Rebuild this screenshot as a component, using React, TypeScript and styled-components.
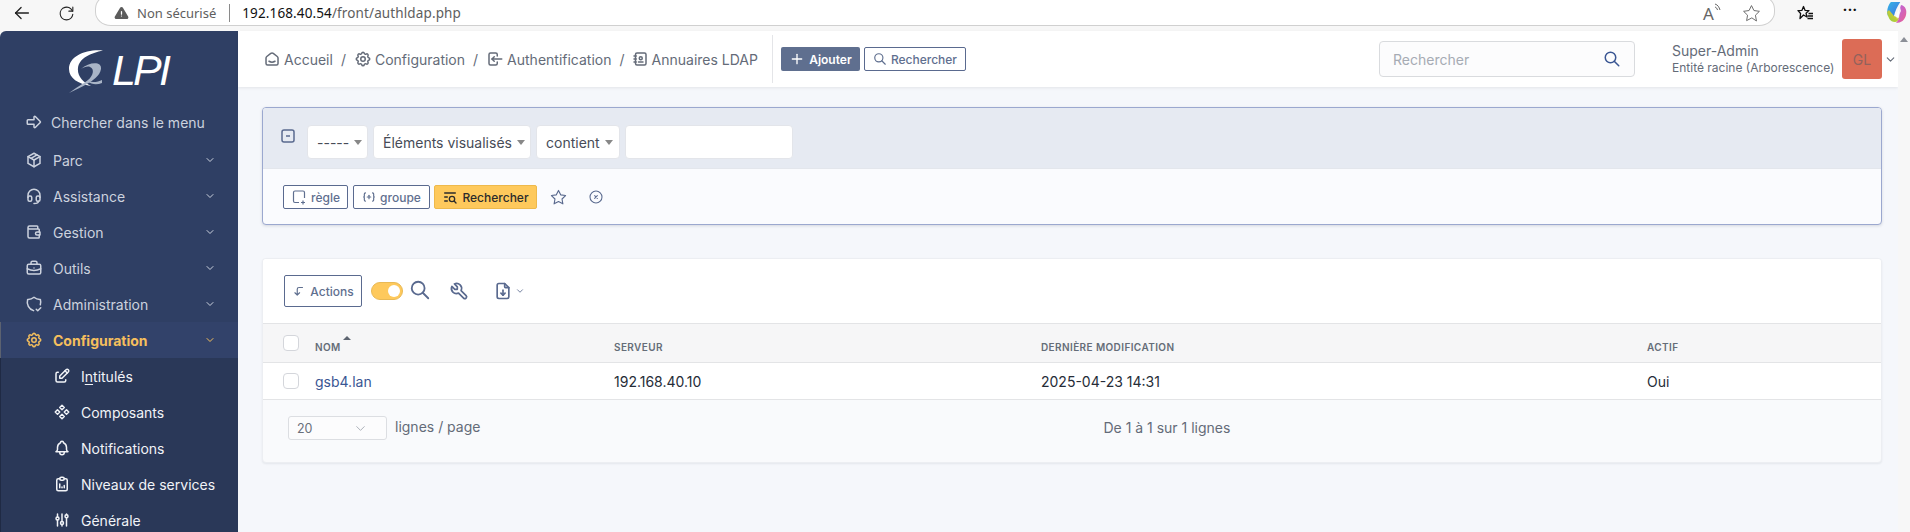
import React from "react";
import styled, { createGlobalStyle } from "styled-components";
import {
  TbAddressBook, TbAdjustments, TbAlertTriangleFilled, TbArrowBigRight, TbArrowLeft, TbBell, TbBriefcase,
  TbChevronDown, TbCircleX, TbCodePlus, TbComponents, TbCornerLeftDown, TbEdit, TbFileDownload, TbHeadset,
  TbListSearch, TbLogin, TbPackage, TbPlus, TbReload, TbReportAnalytics, TbSearch, TbSettings, TbShieldCheck,
  TbSmartHome, TbStar, TbTool, TbWallet,
} from "react-icons/tb";

const Global = createGlobalStyle`
  html, body { margin: 0; padding: 0; height: 100%; overflow: hidden; background: #f7f7f7; }
  body { font-family: Inter, "Liberation Sans", sans-serif; font-size: 14px; }
  * { box-sizing: border-box; }
`;

const Page = styled.div`height: 532px; display: flex; flex-direction: column; overflow: hidden;`;

/* Browser chrome */
const Chrome = styled.div`height: 31px; flex: none; display: flex; align-items: flex-start; background: #f7f7f7; font-family: "Noto Sans", "Liberation Sans", sans-serif;`;
const ChromeBtn = styled.div<{ $w: number }>`
  width: ${p => p.$w}px; height: 26px; flex: none; display: flex; align-items: center; justify-content: center; color: #222;
`;
const AddressBar = styled.div`
  flex: none; width: 1680px; height: 31px; margin-top: -5px; margin-left: 7px; padding: 5px 13px 0 18px;
  display: flex; align-items: center; background: #fff; border: 1px solid #d0d0d0; border-radius: 14px 16px 16px 16px / 14px 14px 14px 14px;
  font-size: 13px; color: #5e5e5e;
`;
const Warn = styled.span`display: flex; color: #5c5c5c; margin-right: 8px;`;
const UrlDivider = styled.span`width: 1px; height: 18px; background: #8a8a8a; margin: 0 12px 0 13px;`;
const UrlHost = styled.span`color: #111; font-size: 13.5px; letter-spacing: .12px;`;
const UrlRest = styled.span`color: #5e5e5e; font-size: 13.5px; letter-spacing: .12px;`;
const AddressEnd = styled.div`margin-left: auto; display: flex; align-items: center; gap: 17px; color: #666;`;
const ReadAloud = styled.span`position: relative; font-size: 17px; width: 22px; color: #666; line-height: 1;`;
const ChromeRight = styled.div`flex: none; display: flex; align-items: center; height: 26px; margin-left: 22px; gap: 29px; color: #111;`;
const Dots = styled.span`font-size: 14px; font-weight: 700; letter-spacing: 1px; line-height: 1; width: 14px; color: #111; margin-top: -6px;`;

/* Main */
const Main = styled.div`flex: 1; min-height: 0; display: flex;`;
const Sidebar = styled.nav`
  width: 238px; flex: none; overflow: hidden; border-top-left-radius: 6px;
  background: #2f3f64;
  display: flex; flex-direction: column;
`;
const LogoZone = styled.div`height: 73px; flex: none; display: flex; align-items: flex-start; padding: 19px 0 0 68px;`;
const LogoText = styled.span`
  font-family: "Liberation Sans", sans-serif; font-style: italic; font-size: 43px; line-height: 40px; letter-spacing: -2.8px;
  color: #fff; margin: 0 0 0 7px;
`;
const Nav = styled.div`display: flex; flex-direction: column;`;
const NavRow = styled.div<{ $active?: boolean; $first?: boolean }>`
  height: 36px; flex: none; display: flex; align-items: center; padding: 0 22px 0 ${p => (p.$active ? 24 : 25)}px; gap: 10px;
  margin-bottom: ${p => (p.$first ? 2 : 0)}px;
  color: ${p => (p.$active ? "#f5bf5d" : "#ccd2de")}; font-weight: ${p => (p.$active ? 700 : 400)};
  background: ${p => (p.$active ? "#32426a" : "transparent")};
  border-left: ${p => (p.$active ? "1px solid #5c6270" : "0")};
  font-size: 14px;
`;
const NavLabel = styled.span<{ $tight?: boolean }>`flex: 1; margin-left: ${p => (p.$tight ? -2 : 0)}px;`;
const SubMenu = styled.div`flex: 1; background: #2a3858; border-left: 1px solid #1f2a44; display: flex; flex-direction: column;`;
const SubRow = styled.div`height: 36px; flex: none; display: flex; align-items: center; gap: 10px; padding-left: 52px; color: #f1f3f7; font-size: 14px;`;
const Under = styled.span`text-decoration: underline; text-underline-offset: 2px;`;

const Content = styled.div`flex: 1; min-width: 0; background: #f5f7fb; display: flex; flex-direction: column;`;
const Header = styled.header`
  height: 56px; flex: none; background: #fff; box-shadow: 0 1px 3px rgba(0,0,0,.08);
  display: flex; align-items: center; padding: 0 9px 0 25px; color: #646b78;
`;
const Crumbs = styled.div`display: flex; align-items: center; height: 48px;`;
const Crumb = styled.span<{ $tight?: boolean }>`display: flex; align-items: center; gap: 3px; color: #646b78; margin-left: ${p => (p.$tight ? -2 : 0)}px;`;
const CrumbSep = styled.span`margin: 0 8px; color: #646b78;`;
const HeadDivider = styled.span`width: 1px; height: 48px; background: #e4e5e8; margin: 0 8px 0 14px;`;
const AddBtn = styled.div`
  height: 24px; width: 79px; display: flex; align-items: center; justify-content: center; gap: 4px; background: #5f6f8f; color: #fff; font-weight: 600;
  font-size: 12px; border-radius: 2px; margin-right: 4px;
`;
const OutlineBtn = styled.div<{ $w?: number; $h?: number }>`
  height: ${p => p.$h ?? 24}px; ${p => (p.$w ? `width: ${p.$w}px;` : "")} display: inline-flex; align-items: center; justify-content: center; gap: 4px;
  background: #fff; border: 1px solid #5a6a8f; border-radius: 2px; color: #5f6f8f; font-size: 12px; font-weight: 500; flex: none;
`;
const HeadRight = styled.div`margin-left: auto; display: flex; align-items: center;`;
const SearchBox = styled.div`
  width: 256px; height: 36px; border: 1px solid #d9dbde; border-radius: 4px; background: #fcfcfd; display: flex; align-items: center;
  padding: 0 13px 0 13px; color: #a6abb4; justify-content: space-between; margin-right: 37px;
`;
const SearchIcon = styled.span`display: flex; color: #3a5693;`;
const UserInfo = styled.div`display: flex; flex-direction: column; gap: 1px; line-height: 16px; color: #646b78; margin-right: 9px; width: 161px;`;
const UserName = styled.span`font-size: 14px;`;
const UserEntity = styled.span`font-size: 12px; white-space: nowrap;`;
const Avatar = styled.div`
  width: 40px; height: 40px; background: #dc6c56; border-radius: 3px; display: flex; align-items: center; justify-content: center; color: #92625c; font-size: 14px;
`;
const UserChevron = styled.span`display: flex; color: #646b78; margin-left: 2px; margin-right: -8px;`;

const Body = styled.div`flex: 1; padding: 20px 16px 0 24px; display: flex; flex-direction: column; gap: 33px;`;
const SearchCard = styled.section`
  height: 118px; flex: none; border: 1px solid #9ba8cf; border-radius: 4px; background: #fafbfe; box-shadow: 0 1px 3px rgba(30,40,70,.15); overflow: hidden;
`;
const CriteriaRow = styled.div`
  height: 61px; background: #e6eaf2; display: flex; align-items: center; padding: 8px 0 0 18px; gap: 5px; border-bottom: 1px solid #e3e6ec;
`;
const Minus = styled.span`display: flex; color: #5a6a8f; margin-right: 7px; margin-top: -12px;`;
const Field = styled.div<{ $w: number }>`
  width: ${p => p.$w}px; height: 34px; background: #fff; border: 1px solid #e3e5ea; border-radius: 4px; padding: 0 6px 0 9px;
  display: flex; align-items: center; gap: 5px; color: #474c57; font-size: 14px; white-space: nowrap;
`;
const Caret = styled.span`width: 0; height: 0; border-left: 4px solid transparent; border-right: 4px solid transparent; border-top: 5px solid #888;`;
const BtnRow = styled.div`display: flex; align-items: center; height: 56px; padding: 0 0 0 20px; gap: 5px;`;
const RunBtn = styled.div`
  width: 103px; height: 24px; background: #fec95c; border: 1px solid #eeb94c; border-radius: 2px; display: flex; align-items: center; justify-content: center; gap: 4px;
  color: #2b2b2b; font-size: 12px; font-weight: 500; margin-left: -1px;
`;
const PlainIcon = styled.span<{ $ml: number }>`display: flex; color: #5a6a8f; margin-left: ${p => p.$ml}px;`;

const TableCard = styled.section`
  height: 205px; flex: none; background: #f9fafc; border: 1px solid #eceef2; border-radius: 4px; box-shadow: 0 1px 2px rgba(30,40,70,.08); overflow: hidden; display: flex; flex-direction: column;
`;
const Toolbar = styled.div`height: 65px; flex: none; background: #fff; display: flex; align-items: center; padding: 0 0 0 21px; border-bottom: 1px solid #e3e4e6;`;
const Toggle = styled.span`width: 32px; height: 18px; border-radius: 9px; background: #fec95c; border: 1px solid #e9b955; position: relative; margin: 0 6px 0 9px; flex: none;`;
const Knob = styled.span`position: absolute; right: 2px; top: 2px; width: 12px; height: 12px; border-radius: 50%; background: #fff;`;
const Tool = styled.span<{ $ml?: number; $up?: number }>`display: flex; align-items: center; color: #5a6a8f; margin-left: ${p => p.$ml ?? 0}px; margin-top: -${p => p.$up ?? 0}px;`;
const Grid = styled.div<{ $head?: boolean }>`
  display: grid; grid-template-columns: 52px 299px 427px 606px 1fr; align-items: center; flex: none; height: ${p => (p.$head ? 39 : 37)}px;
  background: ${p => (p.$head ? "#f6f6f7" : "#fff")}; border-bottom: 1px solid #e3e4e6;
`;
const Check = styled.span`width: 16px; height: 16px; border: 1px solid #d4d6db; border-radius: 4px; background: #fff; margin-left: 20px; display: block;`;
const Th = styled.span`font-size: 10px; font-weight: 600; letter-spacing: .4px; color: #656d78; text-transform: uppercase; position: relative; margin-top: 7px;`;
const SortArrow = styled.span`
  position: absolute; left: 28px; top: -5px; width: 0; height: 0; border-left: 4px solid transparent; border-right: 4px solid transparent; border-bottom: 4px solid #5d6470;
`;
const Td = styled.span`color: #262c37; font-size: 14px;`;
const LinkTd = styled.span`color: #3a5693; font-size: 14px; font-weight: 400;`;
const Footer = styled.div`flex: 1; display: flex; align-items: flex-start; padding: 16px 0 0 25px;`;
const PerPage = styled.div`
  width: 99px; height: 24px; background: #fcfcfd; border: 1px solid #dcdee2; border-radius: 3px; display: flex; align-items: center; justify-content: space-between;
  padding: 0 18px 0 8px; color: #6a707b; font-size: 12.5px;
`;
const FooterLabel = styled.span`margin-left: 8px; color: #646b78; font-size: 14px; line-height: 22px;`;
const FooterCount = styled.span`margin-left: 623px; color: #646b78; font-size: 14px; line-height: 24px;`;

const Scrollbar = styled.div`width: 12px; flex: none; background: #f7f7f7; display: flex; justify-content: center; padding-top: 6px;`;
const ScrollArrow = styled.span`width: 0; height: 0; border-left: 4px solid transparent; border-right: 4px solid transparent; border-bottom: 5px solid #8b8f97;`;

const sideIcon = { size: 18, strokeWidth: 2 };

const navItems: [string, React.ReactNode][] = [
  ["Parc", <TbPackage {...sideIcon} />],
  ["Assistance", <TbHeadset {...sideIcon} />],
  ["Gestion", <TbWallet {...sideIcon} />],
  ["Outils", <TbBriefcase {...sideIcon} />],
  ["Administration", <TbShieldCheck {...sideIcon} />],
];

function Logo() {
  return (
    <svg width="37" height="44" viewBox="0 0 37 44" style={{ flex: "none" }}>
      <path d="M35 0.5 C18 -1 1 6 1 19 C1 28 10 34 23 36 C15 32 9 26 10 18 C11 8 23 3 35 0.5Z" fill="#fff" />
      <path d="M13 19 C21 12 34 11 33 19 C32 26 24 31 19 34 C14 37 7 40 1 43 C9 37 15 34 20 30 C25 26 27 19 22 17 C20 16 16 17 13 19Z" fill="#a9b4c6" />
      <path d="M19 31 C25 33 30 32 34 30 L34 33 C29 35 24 35 19 31Z" fill="#a9b4c6" />
    </svg>
  );
}

function Copilot() {
  return (
    <svg width="21" height="22" viewBox="0 0 21 22">
      <defs>
        <linearGradient id="c1" x1="0" y1="0" x2="1" y2="1"><stop offset="0" stopColor="#35b8e6" /><stop offset="1" stopColor="#3f6fe0" /></linearGradient>
        <linearGradient id="c2" x1="0" y1="1" x2="1" y2="0"><stop offset="0" stopColor="#8bd13c" /><stop offset="1" stopColor="#f5c536" /></linearGradient>
        <linearGradient id="c3" x1="0" y1="0" x2="1" y2="1"><stop offset="0" stopColor="#b266e8" /><stop offset="1" stopColor="#ef5f8c" /></linearGradient>
      </defs>
      <path d="M6 -1 H15 C12 3 9 9 8 14 L2 14 C0 9 2 2 6 -1Z" fill="url(#c1)" />
      <path d="M1 10 C2 15 4 20 9 20 C11 20 12 19 13 16 L8 14 L3 8Z" fill="url(#c2)" />
      <path d="M15 3 C20 4 21 9 20 13 C19 18 15 21 10 21 C13 18 14 13 13 9Z" fill="url(#c3)" />
      <path d="M10 13 L14 5 L15 9 L11 17Z" fill="#fff" opacity=".85" />
    </svg>
  );
}

function Collections() {
  return (
    <svg width="17" height="17" viewBox="0 0 17 17" fill="none" stroke="#111" strokeWidth="1.3">
      <path d="M6.5 1.5 L8 5.3 L12 5.6 L9 8.2 L10 12 L6.5 10 L3 13.5 L3.6 8.5 L1 5.6 L5 5.3Z" strokeLinejoin="round" />
      <path d="M11.5 8.5H16 M10.5 11H16 M10.5 13.5H16" />
    </svg>
  );
}

function MinusBox() {
  return (
    <svg width="14" height="14" viewBox="0 0 14 14" fill="none" stroke="currentColor" strokeWidth="1.5">
      <rect x="1" y="1" width="12" height="12" rx="2" />
      <path d="M5 7H9" />
    </svg>
  );
}

export default function App() {
  return (
    <Page>
      <Global />
      <Chrome>
        <ChromeBtn $w={44}><TbArrowLeft size={22} strokeWidth={1.4} /></ChromeBtn>
        <ChromeBtn $w={44}><TbReload size={19} strokeWidth={1.4} /></ChromeBtn>
        <AddressBar>
          <Warn><TbAlertTriangleFilled size={15} /></Warn>
          <span>Non sécurisé</span>
          <UrlDivider />
          <UrlHost>192.168.40.54</UrlHost>
          <UrlRest>/front/authldap.php</UrlRest>
          <AddressEnd>
            <ReadAloud>A<svg width="8" height="10" viewBox="0 0 8 10" fill="none" stroke="#666" style={{ position: "absolute", left: 11, top: -2 }}><path d="M1 1C4 2 5 4 6 7 M1 4C2.5 4.5 3 5.5 3.5 7" /></svg></ReadAloud>
            <TbStar size={19} strokeWidth={1.2} />
          </AddressEnd>
        </AddressBar>
        <ChromeRight>
          <Collections />
          <Dots>···</Dots>
          <Copilot />
        </ChromeRight>
      </Chrome>
      <Main>
        <Sidebar>
          <LogoZone>
            <Logo />
            <LogoText>LPI</LogoText>
          </LogoZone>
          <Nav>
            <NavRow $first><TbArrowBigRight {...sideIcon} /><NavLabel $tight>Chercher dans le menu</NavLabel></NavRow>
            {navItems.map(([label, icon]) => (
              <NavRow key={label}>{icon}<NavLabel>{label}</NavLabel><TbChevronDown size={12} /></NavRow>
            ))}
            <NavRow $active><TbSettings {...sideIcon} /><NavLabel>Configuration</NavLabel><TbChevronDown size={12} /></NavRow>
          </Nav>
          <SubMenu>
            <SubRow><TbEdit {...sideIcon} /><span>I<Under>n</Under>titulés</span></SubRow>
            <SubRow><TbComponents {...sideIcon} /><span>Composants</span></SubRow>
            <SubRow><TbBell {...sideIcon} /><span>Notifications</span></SubRow>
            <SubRow><TbReportAnalytics {...sideIcon} /><span>Niveaux de services</span></SubRow>
            <SubRow><TbAdjustments {...sideIcon} /><span>Générale</span></SubRow>
          </SubMenu>
        </Sidebar>
        <Content>
          <Header>
            <Crumbs>
              <Crumb><TbSmartHome size={18} /><span>Accueil</span></Crumb>
              <CrumbSep>/</CrumbSep>
              <Crumb><TbSettings size={18} /><span>Configuration</span></Crumb>
              <CrumbSep>/</CrumbSep>
              <Crumb><TbLogin size={18} /><span>Authentification</span></Crumb>
              <CrumbSep>/</CrumbSep>
              <Crumb $tight><TbAddressBook size={18} /><span>Annuaires LDAP</span></Crumb>
            </Crumbs>
            <HeadDivider />
            <AddBtn><TbPlus size={16} /><span>Ajouter</span></AddBtn>
            <OutlineBtn $w={102}><TbSearch size={14} /><span>Rechercher</span></OutlineBtn>
            <HeadRight>
              <SearchBox><span>Rechercher</span><SearchIcon><TbSearch size={18} /></SearchIcon></SearchBox>
              <UserInfo><UserName>Super-Admin</UserName><UserEntity>Entité racine (Arborescence)</UserEntity></UserInfo>
              <Avatar>GL</Avatar>
              <UserChevron><TbChevronDown size={13} /></UserChevron>
            </HeadRight>
          </Header>
          <Body>
            <SearchCard>
              <CriteriaRow>
                <Minus><MinusBox /></Minus>
                <Field $w={61}><span>-----</span><Caret /></Field>
                <Field $w={158}><span>Éléments visualisés</span><Caret /></Field>
                <Field $w={84}><span>contient</span><Caret /></Field>
                <Field $w={168} />
              </CriteriaRow>
              <BtnRow>
                <OutlineBtn $w={65}>
                  <svg width="16" height="16" viewBox="0 0 16 16" fill="none" stroke="currentColor" strokeWidth="1.2"><path d="M8 13.5H4a1.5 1.5 0 0 1-1.5-1.5V3.5A1.5 1.5 0 0 1 4 2h8a1.5 1.5 0 0 1 1.5 1.5V9 M10 13.5h4 M12 11.5v4" /></svg>
                  <span>règle</span>
                </OutlineBtn>
                <OutlineBtn $w={77}><TbCodePlus size={14} /><span>groupe</span></OutlineBtn>
                <RunBtn><TbListSearch size={16} /><span>Rechercher</span></RunBtn>
                <PlainIcon $ml={8}><TbStar size={17} strokeWidth={1.6} /></PlainIcon>
                <PlainIcon $ml={16}><TbCircleX size={16} strokeWidth={1.6} /></PlainIcon>
              </BtnRow>
            </SearchCard>
            <TableCard>
              <Toolbar>
                <OutlineBtn $w={78} $h={32}><TbCornerLeftDown size={14} /><span>Actions</span></OutlineBtn>
                <Toggle><Knob /></Toggle>
                <Tool $up={3}><TbSearch size={22} /></Tool>
                <Tool $ml={18}><TbTool size={20} /></Tool>
                <Tool $ml={24}><TbFileDownload size={20} /></Tool>
                <Tool $ml={2}><TbChevronDown size={10} /></Tool>
              </Toolbar>
              <Grid $head>
                <Check />
                <Th>Nom<SortArrow /></Th>
                <Th>Serveur</Th>
                <Th>Dernière modification</Th>
                <Th>Actif</Th>
              </Grid>
              <Grid>
                <Check />
                <LinkTd>gsb4.lan</LinkTd>
                <Td>192.168.40.10</Td>
                <Td>2025-04-23 14:31</Td>
                <Td>Oui</Td>
              </Grid>
              <Footer>
                <PerPage><span>20</span><TbChevronDown size={15} strokeWidth={1.3} color="#9aa0aa" /></PerPage>
                <FooterLabel>lignes / page</FooterLabel>
                <FooterCount>De 1 à 1 sur 1 lignes</FooterCount>
              </Footer>
            </TableCard>
          </Body>
        </Content>
        <Scrollbar><ScrollArrow /></Scrollbar>
      </Main>
    </Page>
  );
}
